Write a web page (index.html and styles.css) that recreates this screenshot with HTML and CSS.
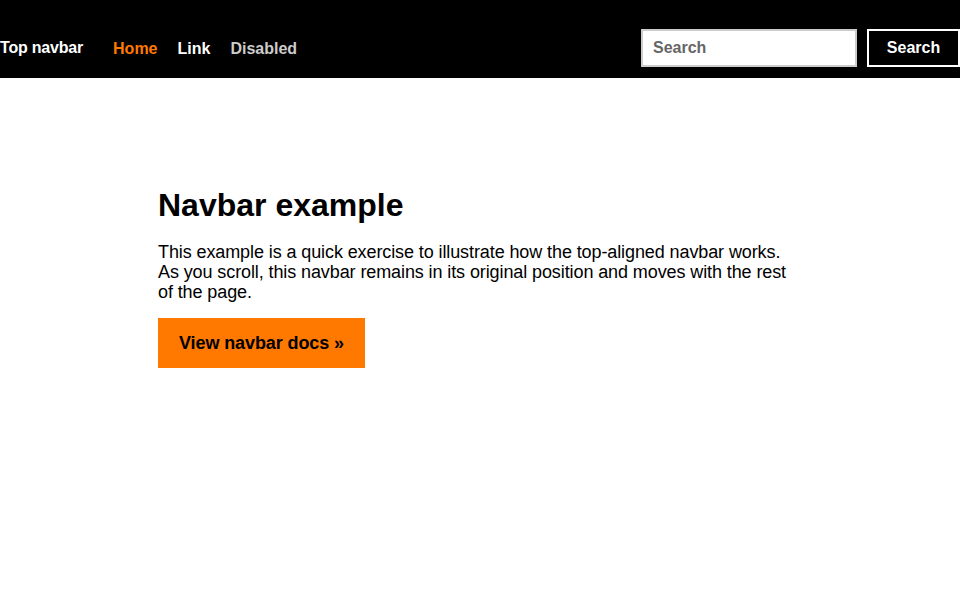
FILE: index.html
```html
<!DOCTYPE html>
<html lang="en">
<head>
<meta charset="utf-8">
<title>Top navbar example</title>
<link rel="stylesheet" href="styles.css">
</head>
<body>
<nav class="navbar">
  <a class="brand" href="#">Top navbar</a>
  <ul class="nav">
    <li><a class="nav-link active" href="#">Home</a></li>
    <li><a class="nav-link" href="#">Link</a></li>
    <li><a class="nav-link disabled" href="#">Disabled</a></li>
  </ul>
  <form class="search">
    <input class="search-input" type="search" placeholder="Search" aria-label="Search">
    <button class="search-btn" type="submit">Search</button>
  </form>
</nav>
<main class="container">
  <h1 class="title">Navbar example</h1>
  <p class="lead">This example is a quick exercise to illustrate how the top-aligned navbar works. As you scroll, this navbar remains in its original position and moves with the rest of the page.</p>
  <a class="btn-primary" href="#">View navbar docs »</a>
</main>
</body>
</html>
```
FILE: styles.css
```css
* { box-sizing: border-box; }
html, body { margin: 0; padding: 0; }
body {
  font-family: "Liberation Sans", Arial, sans-serif;
  color: #000;
  background: #fff;
}
.navbar {
  display: flex;
  align-items: center;
  height: 78px;
  background: #000;
  padding: 29px 0 11px;
}
.brand {
  color: #fff;
  font-weight: 700;
  font-size: 16px;
  line-height: 20px;
  letter-spacing: -0.2px;
  text-decoration: none;
  margin-top: -1px;
  margin-right: 20px;
}
.nav {
  display: flex;
  list-style: none;
  margin: 0;
  padding: 0;
  flex: 1;
}
.nav-link {
  display: block;
  padding: 0 10px;
  color: #fff;
  font-weight: 700;
  font-size: 16px;
  line-height: 20px;
  letter-spacing: 0;
  text-decoration: none;
  margin-top: 1px;
}
.nav-link.active { color: #ff7900; }
.nav-link.disabled { color: #ccc; }
.search {
  display: flex;
  gap: 10px;
  margin: 0;
}
.search-input {
  width: 216px;
  height: 38px;
  border: 2px solid #ccc;
  background: #fff;
  padding: 0 10px;
  font-family: inherit;
  font-weight: 700;
  font-size: 16px;
  color: #000;
  outline: none;
}
.search-input::placeholder { color: #666; }
.search-btn {
  width: 93px;
  height: 38px;
  border: 2px solid #fff;
  background: #000;
  color: #fff;
  font-family: inherit;
  font-weight: 700;
  font-size: 16px;
  padding: 0;
}
.container {
  width: 644px;
  margin: 0 auto;
  padding-top: 110px;
}
.title {
  margin: 0 0 19px;
  font-size: 32px;
  line-height: 35px;
  font-weight: 700;
  letter-spacing: 0;
}
.lead {
  max-width: 636px;
  margin: 0 0 16px;
  font-size: 18px;
  line-height: 20px;
  letter-spacing: -0.1px;
}
.btn-primary {
  display: inline-block;
  height: 50px;
  line-height: 50px;
  padding: 0 21px;
  background: #ff7900;
  color: #000;
  font-weight: 700;
  font-size: 18px;
  letter-spacing: -0.1px;
  text-decoration: none;
}
```
